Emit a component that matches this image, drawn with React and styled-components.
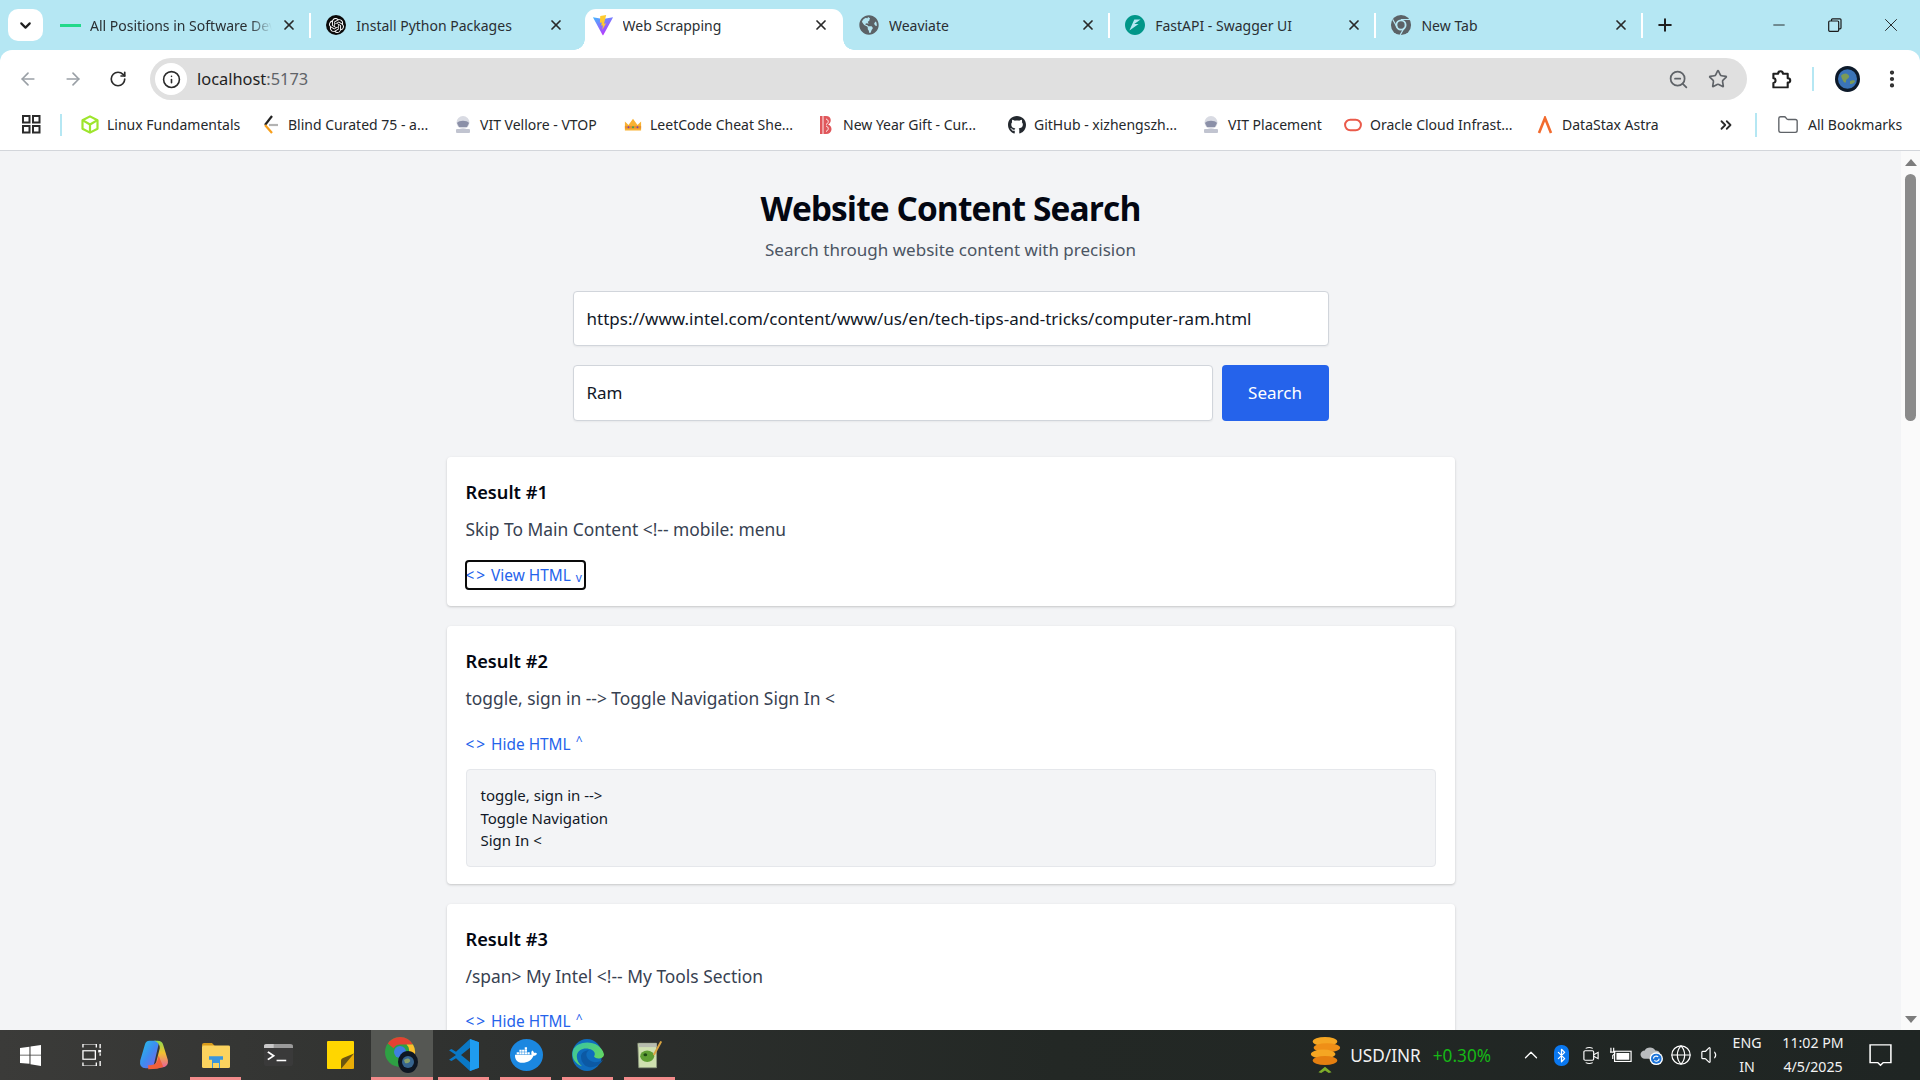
import React from 'react';
import styled, { createGlobalStyle } from 'styled-components';
import { ChevronDown, X, Plus, Minus, ArrowLeft, ArrowRight, RotateCw, Info, ZoomOut, Star, MoreVertical, Folder, ChevronsRight, ChevronUp, Bluetooth, Globe, Volume1 } from 'lucide-react';
import { FaGithub, FaGlobeAmericas, FaDocker } from 'react-icons/fa';
import { SiOpenai, SiFastapi } from 'react-icons/si';

const GlobalStyle = createGlobalStyle`
  html, body {
    margin: 0;
    padding: 0;
    height: 100%;
    overflow: hidden;
    font-family: "Noto Sans", "Open Sans", sans-serif;
  }
  * { box-sizing: border-box; }
`;

const Screen = styled.div`
  width: 1920px;
  height: 1080px;
  display: flex;
  flex-direction: column;
  overflow: hidden;
  background: #b5e7f3;
`;

/* ---- browser tabs ---- */
const TabStrip = styled.div`
  height: 50px;
  flex: none;
  display: flex;
  align-items: flex-start;
  padding-left: 8px;
  color: #2a2f33;
`;

const TabMenu = styled.div`
  width: 35px;
  height: 32px;
  margin-top: 9px;
  margin-right: 2px;
  border-radius: 10px;
  background: #fff;
  display: flex;
  align-items: center;
  justify-content: center;
`;

const Tab = styled.div`
  position: relative;
  width: 266.3px;
  height: 41px;
  margin-top: 9px;
  display: flex;
  align-items: center;
  padding: 0 14px 9px 14px;
  gap: 9px;
  font-size: 14px;
  white-space: nowrap;
  ${(p) => p.$active && `
    background: #fff;
    border-radius: 11px 11px 0 0;
    width: 258px;
    margin-left: 7px;
    margin-right: 1.3px;
    padding: 0 14px 9px 7px;
    &::before, &::after {
      content: '';
      position: absolute;
      bottom: 0;
      width: 11px;
      height: 11px;
      background: radial-gradient(circle at var(--cx) 0, #b5e7f3 10.5px, #fff 11px);
    }
    &::before { left: -11px; --cx: 0; }
    &::after { right: -11px; --cx: 100%; }
  `}
  ${(p) => p.$divider && `
    &::after {
      content: '';
      position: absolute;
      right: 0;
      top: 4px;
      width: 2px;
      height: 25px;
      background: #fff;
    }
  `}
`;

const TabIcon = styled.span`
  width: 22px;
  height: 22px;
  flex: none;
  display: flex;
  align-items: center;
  justify-content: center;
`;

const RoundBadge = styled.span`
  width: 20px;
  height: 20px;
  border-radius: 50%;
  background: #0a0a0a;
  display: flex;
  align-items: center;
  justify-content: center;
`;

const TabTitle = styled.span`
  flex: 1;
  min-width: 0;
  overflow: hidden;
  ${(p) => p.$fade && `
    -webkit-mask-image: linear-gradient(to right, #000 88%, transparent);
    mask-image: linear-gradient(to right, #000 88%, transparent);
  `}
`;

const GreenDash = styled.span`
  width: 21px;
  height: 3px;
  background: #22d98a;
`;

const NewTab = styled.div`
  width: 44px;
  height: 32px;
  margin-top: 9px;
  display: flex;
  align-items: center;
  justify-content: center;
`;

const WindowControls = styled.div`
  margin-left: auto;
  display: flex;
  height: 50px;
  padding-right: 1px;
`;

const WindowButton = styled.div`
  width: 56px;
  height: 50px;
  display: flex;
  align-items: center;
  justify-content: center;
`;

/* ---- address bar ---- */
const Toolbar = styled.div`
  height: 50px;
  flex: none;
  background: #fff;
  border-radius: 12px 12px 0 0;
  display: flex;
  align-items: flex-end;
  padding: 0 0 0 5px;
`;

const NavButton = styled.div`
  width: 45px;
  height: 42px;
  display: flex;
  align-items: center;
  justify-content: center;
`;

const Omnibox = styled.div`
  width: 1597px;
  height: 42px;
  margin-left: 10px;
  border-radius: 21px;
  background: #e0e0e0;
  display: flex;
  align-items: center;
  padding: 0 19px 0 5px;
  font-size: 16.4px;
`;

const SiteInfo = styled.div`
  width: 32px;
  height: 32px;
  border-radius: 50%;
  background: #fff;
  display: flex;
  align-items: center;
  justify-content: center;
  margin-right: 10px;
`;

const HostText = styled.span`
  padding-bottom: 1px;
`;

const Host = styled.span`
  color: #1f1f1f;
`;

const Port = styled.span`
  color: #5f6368;
`;

const OmniActions = styled.div`
  margin-left: auto;
  display: flex;
  gap: 19px;
  align-items: center;
`;

const ToolbarActions = styled.div`
  flex: 1;
  height: 42px;
  display: flex;
  align-items: center;
  padding-left: 24px;
`;

const VSep = styled.span`
  width: 2px;
  height: ${(p) => p.$h || 24}px;
  background: #b5e7f3;
  flex: none;
  margin: ${(p) => p.$m || '0'};
`;

const Avatar = styled.span`
  width: 25px;
  height: 26px;
  flex: none;
  display: flex;
  align-items: center;
  margin-right: 21px;
`;

const Dots = styled(MoreVertical)`
  flex: none;
`;

/* ---- bookmarks ---- */
const BookmarkBar = styled.div`
  height: 51px;
  flex: none;
  background: #fff;
  border-bottom: 1px solid #d3d6db;
  display: flex;
  align-items: center;
  padding: 0 0 1px 22px;
  font-size: 14px;
  color: #25282b;
  white-space: nowrap;
`;

const Bookmark = styled.div`
  width: ${(p) => p.$w}px;
  flex: none;
  display: flex;
  align-items: center;
  gap: 8px;
  overflow: hidden;
`;

const BookmarkIcon = styled.span`
  width: 18px;
  height: 20px;
  flex: none;
  display: flex;
  align-items: center;
  justify-content: center;
`;

const FolderIcon = styled(Folder)`
  flex: none;
  margin-right: 9px;
`;

/* ---- page ---- */
const Viewport = styled.div`
  flex: 1;
  min-height: 0;
  display: flex;
  background: #f3f4f6;
`;

const Content = styled.main`
  flex: 1;
  min-width: 0;
  overflow: hidden;
  display: flex;
  flex-direction: column;
  align-items: center;
  padding-top: 32px;
`;

const Title = styled.h1`
  margin: 0;
  font-size: 33.5px;
  line-height: 50px;
  font-weight: 700;
  color: #030712;
  font-family: "Open Sans", sans-serif;
  letter-spacing: -0.9px;
`;

const Subtitle = styled.p`
  margin: 3px 0 0;
  font-size: 17px;
  line-height: 28px;
  color: #4b5563;
`;

const SearchForm = styled.div`
  width: 756px;
  margin-top: 27px;
  display: flex;
  flex-direction: column;
  gap: 19px;
`;

const SearchRow = styled.div`
  display: flex;
  gap: 9px;
`;

const Field = styled.div`
  flex: 1 0 auto;
  height: ${(p) => p.$h}px;
  background: #fff;
  border: 1px solid #d1d5db;
  border-radius: 4px;
  padding: 0 13px ${(p) => p.$pb || 0}px;
  display: flex;
  align-items: center;
  font-size: 17px;
  color: #111827;
  white-space: nowrap;
  box-shadow: 0 1px 2px rgba(0, 0, 0, 0.05);
`;

const SearchButton = styled.button`
  width: 107px;
  height: 56px;
  border: none;
  border-radius: 4px;
  background: #2563eb;
  color: #fff;
  font: inherit;
  font-size: 17px;
  padding: 0 0 2px;
`;

const Results = styled.div`
  width: 1008px;
  margin-top: 36px;
  display: flex;
  flex-direction: column;
  gap: 20px;
  flex: none;
`;

const Card = styled.section`
  background: #fff;
  border-radius: 4px;
  padding: 21px 19px 17px;
  box-shadow: 0 1px 3px rgba(0, 0, 0, 0.14), 0 1px 2px rgba(0, 0, 0, 0.06);
`;

const CardTitle = styled.h3`
  margin: 0;
  font-size: 18.2px;
  line-height: 28px;
  font-weight: 600;
  color: #030712;
`;

const Snippet = styled.p`
  margin: 9px 0 0;
  font-size: 17.4px;
  line-height: 28px;
  color: #374151;
`;

const HtmlToggle = styled.button`
  display: inline-flex;
  align-items: center;
  height: 28px;
  margin-top: 18px;
  padding: 0;
  border: none;
  background: none;
  color: #2563eb;
  font: inherit;
  font-size: 15.4px;
  gap: 5px;
  border-radius: 3px;
  white-space: pre;
  width: ${(p) => (p.$focused ? '119px' : 'auto')};
  ${(p) => p.$focused && 'outline: 2px solid #0a0a0a; outline-offset: -1px;'}
`;

const CodeMark = styled.span`
  letter-spacing: 2px;
`;

const Caret = styled.span`
  font-size: 12px;
  line-height: 1;
  transform: translateY(${(p) => p.$y}px);
`;

const HtmlBlock = styled.div`
  margin-top: 11px;
  background: #f3f4f6;
  border: 1px solid #e5e7eb;
  border-radius: 4px;
  padding: 14px 14px;
  font-size: 15px;
  line-height: 22.5px;
  color: #111827;
`;

const ScrollTrack = styled.div`
  width: 19px;
  flex: none;
  background: #fafafa;
  display: flex;
  flex-direction: column;
  align-items: center;
  padding-top: 8px;
`;

const ScrollThumb = styled.div`
  width: 11px;
  height: 247px;
  margin-top: 8px;
  border-radius: 6px;
  background: #8a8a8a;
`;

const ArrowBlock = styled.span`
  width: 0;
  height: 0;
  border-left: 6px solid transparent;
  border-right: 6px solid transparent;
  ${(p) => (p.$down
    ? 'border-top: 7px solid #7c7c7c; margin-top: auto; margin-bottom: 7px;'
    : 'border-bottom: 7px solid #7c7c7c;')}
`;

/* ---- taskbar ---- */
const Taskbar = styled.footer`
  height: 50px;
  flex: none;
  display: flex;
  align-items: center;
  background: linear-gradient(90deg, #3b3b39 0%, #2f312f 25%, #232825 55%, #1f2523 100%);
  color: #f2f2f2;
`;

const Launcher = styled.div`
  display: flex;
  height: 100%;
  margin-left: -1px;
`;

const TaskCell = styled.div`
  position: relative;
  width: 62px;
  height: 100%;
  display: flex;
  align-items: center;
  justify-content: center;
  ${(p) => p.$active && 'background: #555753;'}
  ${(p) => p.$open && `
    &::after {
      content: '';
      position: absolute;
      bottom: 0;
      height: 3px;
      left: ${p.$active ? 0 : 5}px;
      right: ${p.$active ? 0 : 6}px;
      background: #f28b8b;
    }
  `}
`;

const Tray = styled.div`
  margin-left: auto;
  height: 100%;
  display: flex;
  align-items: center;
`;

const Ticker = styled.div`
  display: flex;
  align-items: center;
  gap: 9px;
  font-size: 17.2px;
  white-space: nowrap;
`;

const Gain = styled.span`
  color: #16b816;
  margin-left: 3px;
`;

const TrayIcon = styled.span`
  width: 30px;
  height: 30px;
  flex: none;
  display: flex;
  align-items: center;
  justify-content: center;
`;

const BluetoothBadge = styled.span`
  width: 15px;
  height: 21px;
  border-radius: 7px;
  background: #0a78f0;
  display: flex;
  align-items: center;
  justify-content: center;
`;

const TrayIcons = styled.div`
  display: flex;
  align-items: center;
  margin-left: 25px;
`;

const Stack = styled.div`
  width: ${(p) => p.$w}px;
  margin-right: ${(p) => p.$mr || 0}px;
  flex: none;
  display: flex;
  flex-direction: column;
  align-items: center;
  font-size: 14.2px;
  line-height: 24px;
  white-space: nowrap;
`;

const Notify = styled.div`
  width: 64px;
  margin-right: 8px;
  flex: none;
  display: flex;
  justify-content: center;
`;

const DockerBadge = styled.span`
  width: 33px;
  height: 32px;
  border-radius: 50%;
  background: #1b87e0;
  display: flex;
  align-items: center;
  justify-content: center;
`;

/* ---- logos drawn by hand ---- */
const ViteLogo = () => (
  <svg width="22" height="22" viewBox="0 0 24 24">
    <defs>
      <linearGradient id="viteA" x1="0" y1="0" x2="0.6" y2="1">
        <stop offset="0" stopColor="#41b8ff" />
        <stop offset="1" stopColor="#bd34fe" />
      </linearGradient>
    </defs>
    <path d="M1 3.500 12 5.500 23 3.500 12.400 23a.5.5 0 0 1-.9 0Z" fill="url(#viteA)" />
    <path d="M15.500 1 9 2.300l-.4 7.300 2-.4-.4 3.600 1.700-.4-.6 4.800 4-7-2.200.4 1.200-5Z" fill="#ffcb2e" />
  </svg>
);

const ChromeGray = () => (
  <svg width="22" height="22" viewBox="0 0 24 24">
    <circle cx="12" cy="12" r="11" fill="#5b6266" />
    <circle cx="12" cy="12" r="6" fill="#b5e7f3" />
    <circle cx="12" cy="12" r="4" fill="#5b6266" />
    <path d="M12 6h10M8 15 3 6M15.500 15 11 23" stroke="#b5e7f3" strokeWidth="1.300" />
  </svg>
);

const AppsGrid = () => (
  <svg width="19" height="19" viewBox="0 0 19 19" fill="none" stroke="#2b2b2b" strokeWidth="2">
    <rect x="1" y="1" width="6.500" height="6.500" />
    <rect x="11" y="1" width="6.500" height="6.500" />
    <rect x="1" y="11" width="6.500" height="6.500" />
    <rect x="11" y="11" width="6.500" height="6.500" />
  </svg>
);

const CubeIcon = () => (
  <svg width="18" height="19" viewBox="0 0 18 20" fill="none" stroke="#9ee52d" strokeWidth="2.200" strokeLinejoin="round" preserveAspectRatio="none">
    <path d="M9 1.500 16.500 5.500v9L9 18.500 1.500 14.500v-9Z" />
    <path d="M1.500 5.500 9 10l7.500-4.500M9 10v8.500" />
  </svg>
);

const BlindIcon = () => (
  <svg width="18" height="22" viewBox="0 0 18 22" fill="none" strokeWidth="2.200">
    <path d="M10 2 3 11" stroke="#222" />
    <path d="M3 11l7 8" stroke="#f89f1b" />
    <path d="M7 11h9" stroke="#b3b3b3" />
  </svg>
);

const SealIcon = () => (
  <svg width="18" height="20" viewBox="0 0 18 20">
    <circle cx="9" cy="7.500" r="6.500" fill="#d9dbe3" />
    <path d="M3 8c2-3 10-3 12 0l-2 4H5Z" fill="#8b90a8" />
    <rect x="2" y="14" width="14" height="4" rx="1" fill="#c1c4d0" />
  </svg>
);

const CrownIcon = () => (
  <svg width="20" height="20" viewBox="0 0 20 20">
    <path d="M1 16V6l4 4 5-7 5 7 4-4v10Z" fill="#f9b233" />
    <rect x="1" y="11" width="18" height="3" fill="#e8912d" />
    <circle cx="5" cy="12.500" r="1" fill="#7a3fb0" />
    <circle cx="10" cy="12.500" r="1.200" fill="#3fa34d" />
    <circle cx="15" cy="12.500" r="1" fill="#7a3fb0" />
  </svg>
);

const GiftIcon = () => (
  <svg width="16" height="20" viewBox="0 0 16 20">
    <path d="M2 1h6c6 0 6 7 2 8.500 5 1 5 9.500-2 9.500H2Z" fill="#e0575b" />
    <path d="M5 1v18M8 4c3 1 3 4 0 5.500M8 11c3 1 3 4 0 5.500" stroke="#fff" strokeWidth="0.900" fill="none" />
  </svg>
);

const AstraIcon = () => (
  <svg width="16" height="18" viewBox="0 0 16 18" fill="none" stroke="#f26b2e" strokeWidth="2.600">
    <path d="M2 17 8 2l6 15" />
  </svg>
);

const OracleIcon = () => (
  <svg width="20" height="14" viewBox="0 0 20 14" fill="none">
    <rect x="1.200" y="1.200" width="17.600" height="11.600" rx="5.800" stroke="#ea5a4a" strokeWidth="2.200" />
  </svg>
);

const Puzzle = () => (
  <svg width="21" height="21" viewBox="0 0 22 24" fill="none" stroke="#1f1f1f" strokeWidth="2.200" strokeLinejoin="round" preserveAspectRatio="none">
    <path d="M2.500 5.500h5c0-4 5-4 5 0h5v5c3.500 0 3.500 5 0 5v5.500H2.500v-5c3 0 3-5.500 0-5.500Z" />
  </svg>
);

const EarthAvatar = () => (
  <svg width="25" height="26" viewBox="0 0 25 29" preserveAspectRatio="none">
    <ellipse cx="12.500" cy="14.500" rx="12.500" ry="14.500" fill="#0d1a2a" />
    <ellipse cx="12.500" cy="14.500" rx="9.500" ry="11" fill="#3b74b8" />
    <path d="M6 11c3-4 7-3 8 0s-3 3-3 6-3 2-5-6ZM15 17c3-2 5-1 5 0s-3 4-5 3Z" fill="#7c9a55" />
  </svg>
);

const Restore = () => (
  <svg width="14" height="14" viewBox="0 0 14 14" fill="none" stroke="#1b1b1b" strokeWidth="1.200">
    <rect x="0.700" y="3" width="10" height="10.300" rx="1" />
    <path d="M3.500 3V1.800q0-1 1-1h7.500q1 0 1 1v8q0 1-1 1h-1.200" />
  </svg>
);

const WindowsLogo = () => (
  <svg width="21" height="21" viewBox="0 0 20 24" fill="#fff" preserveAspectRatio="none">
    <path d="M0 3.500 9 2v9H0ZM10 1.800 20 0v11H10ZM0 12h9v9.500L0 20.500ZM10 12h10v12l-10-2Z" />
  </svg>
);

const TaskView = () => (
  <svg width="21" height="22" viewBox="0 0 22 26" fill="none" stroke="#fff" strokeWidth="1.400" preserveAspectRatio="none">
    <path d="M1 0h14v4M1 26h14v-4M1 0v4M1 26v-4" />
    <rect x="1" y="8" width="13" height="10" />
    <path d="M19 0v5M19 11v3M19 20v6" />
    <rect x="17" y="7" width="3" height="3" fill="#fff" stroke="none" />
  </svg>
);

const Copilot = () => (
  <svg width="30" height="30" viewBox="0 0 26 36" preserveAspectRatio="none">
    <defs>
      <linearGradient id="copA" x1="0" y1="0" x2="1" y2="1">
        <stop offset="0" stopColor="#22c3e6" />
        <stop offset="0.500" stopColor="#3e8bf0" />
        <stop offset="1" stopColor="#8a5be8" />
      </linearGradient>
      <linearGradient id="copB" x1="0" y1="0" x2="0" y2="1">
        <stop offset="0" stopColor="#8ad94f" />
        <stop offset="0.450" stopColor="#f2c230" />
        <stop offset="1" stopColor="#e8609c" />
      </linearGradient>
    </defs>
    <path d="M9 1h5q3 0 3 4l-4 24q-1 5-5 5H6Q0 34 1 25L5 6q1-5 4-5Z" fill="url(#copA)" />
    <path d="M13 1h3q4 0 5 5l4 18q1 8-5 9h-9q3-2 4-7l3-16q0-7-5-9Z" fill="url(#copB)" />
    <path d="M8 30c4 1 7-1 8-5l1-6 4 13q-4 3-13 3Z" fill="#f0603c" />
  </svg>
);

const Explorer = () => (
  <svg width="28" height="25" viewBox="0 0 28 30" preserveAspectRatio="none">
    <path d="M0 2q0-2 2-2h8l3 4H0Z" fill="#d89b1a" />
    <rect y="3" width="28" height="27" rx="1.500" fill="#fbd35e" />
    <path d="M7 16h14v4h-3v10h-8V20H7Z" fill="#3a96dd" />
    <rect x="11" y="24" width="6" height="6" fill="#fbd35e" />
  </svg>
);

const TerminalApp = () => (
  <svg width="29" height="22" viewBox="0 0 30 28" preserveAspectRatio="none">
    <rect width="30" height="28" rx="3" fill="#3a3a3a" />
    <path d="M0 3q0-3 3-3h24q3 0 3 3v2H0Z" fill="#9a9a9a" />
    <path d="M0 3q0-3 3-3h7v5H0Z" fill="#c8c8c8" />
    <path d="M4 10l6 5-6 5" stroke="#fff" strokeWidth="2" fill="none" />
    <rect x="13" y="20" width="10" height="2" fill="#fff" />
  </svg>
);

const StickyNotes = () => (
  <svg width="27" height="28" viewBox="0 0 27 36" preserveAspectRatio="none">
    <path d="M1 0h25q1 0 1 1v33q0 2-2 2H1q-1 0-1-1V1q0-1 1-1Z" fill="#ffd600" />
    <path d="M14 36V25q0-2 2-3l11-6v18q0 2-2 2Z" fill="#6b5510" />
    <path d="M14 36 27 16v18q0 2-2 2Z" fill="#e9ad07" />
  </svg>
);

const ChromeApp = () => (
  <svg width="34" height="36" viewBox="0 0 34 36">
    <circle cx="15" cy="15" r="15" fill="#2ea043" />
    <path d="M15 0a15 15 0 0 1 13 7.500H15a7.500 7.500 0 0 0-6.500 3.800L2.800 6.500A15 15 0 0 1 15 0Z" fill="#e34133" />
    <path d="M28 7.500A15 15 0 0 1 15 30l6.500-11a7.500 7.500 0 0 0 0-11.500Z" fill="#fbc02d" />
    <circle cx="15" cy="15" r="6" fill="#3f7fe0" />
    <ellipse cx="23" cy="25" rx="10" ry="11" fill="#0e1622" />
    <circle cx="23" cy="25" r="6" fill="#37658f" />
    <path d="M19 23c3-2 5-2 6 0s-3 4-5 3Z" fill="#88a06a" />
  </svg>
);

const VsCode = () => (
  <svg width="30" height="32" viewBox="0 0 30 40" fill="#0a78c6" preserveAspectRatio="none">
    <path d="M21 0 30 4v32l-9 4L7 24l-4.500 3.500L0 26l7-6-7-6 2.500-1.500L7 16Zm0 11-9 9 9 9Z" />
    <path d="M21 0 30 4v32l-9 4Z" fill="#1f9cf0" />
  </svg>
);

const EdgeApp = () => (
  <svg width="32" height="32" viewBox="0 0 32 40" preserveAspectRatio="none">
    <defs>
      <linearGradient id="edgeA" x1="0" y1="0" x2="1" y2="1">
        <stop offset="0" stopColor="#36c2a8" />
        <stop offset="1" stopColor="#6fdc4f" />
      </linearGradient>
    </defs>
    <ellipse cx="15" cy="20" rx="15" ry="20" fill="#0f6cbd" />
    <path d="M1 14C5 1 28 0 32 19c0 6-8 7-10 3 4-8-8-13-14-8C3 18 4 28 10 34 2 30-1 22 1 14Z" fill="url(#edgeA)" />
    <path d="M9 22c0-5 4-8 8-8-5 3-3 14 6 15 3 0 6-1 8-3-3 8-12 12-18 7-3-3-4-7-4-11Z" fill="#0c59a4" />
  </svg>
);

const NotepadApp = () => (
  <svg width="28" height="29" viewBox="0 0 30 38" preserveAspectRatio="none">
    <path d="M2 3h20v32H3Z" fill="#cfe0b0" stroke="#8e9a80" />
    <path d="M3 3h19v5H3Z" fill="#b7bcae" />
    <circle cx="12" cy="20" r="7.500" fill="#5f9e34" />
    <circle cx="10" cy="18" r="2" fill="#1f4a14" />
    <path d="M26 0l2 1-8 18-2-1Z" fill="#d9a441" />
  </svg>
);

const Coins = () => (
  <svg width="32" height="38" viewBox="0 0 34 42" preserveAspectRatio="none">
    <ellipse cx="17" cy="6" rx="13" ry="5" fill="#f5a623" />
    <ellipse cx="19" cy="13" rx="14" ry="5" fill="#ef8f17" />
    <ellipse cx="15" cy="20" rx="13" ry="5" fill="#f5a623" />
    <ellipse cx="17" cy="27" rx="13" ry="5" fill="#e57f10" />
    <path d="M10 40l7-6 7 6-3 1-4-3-4 3Z" fill="#7fae2a" />
  </svg>
);

const MeetIcon = () => (
  <svg width="16" height="19" viewBox="0 0 18 24" fill="none" stroke="#fff" strokeWidth="1.300" preserveAspectRatio="none">
    <rect x="1" y="6" width="11" height="12" rx="1.500" />
    <path d="M12 11l5-3v8l-5-3M3 3q4-2 8 0M3 21q4 2 8 0" />
  </svg>
);

const BatteryPlug = () => (
  <svg width="22" height="17" viewBox="0 0 24 20" fill="none" preserveAspectRatio="none">
    <rect x="5" y="5" width="18" height="12" stroke="#fff" strokeWidth="1.300" />
    <rect x="7" y="7" width="14" height="8" fill="#fff" />
    <path d="M1 1v5M4 1v5M0 6h5v2l-2 2v4" stroke="#fff" strokeWidth="1.300" />
  </svg>
);

const CloudSync = () => (
  <svg width="23" height="20" viewBox="0 0 24 22" preserveAspectRatio="none">
    <path d="M5 15a4.500 4.500 0 0 1 0-9c1-4 9-5 11 0a4 4 0 0 1 1 9Z" fill="#b9bcbe" />
    <circle cx="17" cy="15" r="7" fill="#fff" />
    <circle cx="17" cy="15" r="5.500" fill="#1c74d9" />
    <path d="M14 15a3 3 0 0 1 5-2M20 15a3 3 0 0 1-5 2" stroke="#fff" strokeWidth="1.200" fill="none" />
  </svg>
);

const Bubble = () => (
  <svg width="23" height="23" viewBox="0 0 21 26" fill="none" stroke="#fff" strokeWidth="1.400" preserveAspectRatio="none">
    <path d="M1 1h19v20h-7l-2.500 3-2.500-3H1Z" />
  </svg>
);

const tabs = [
  { title: 'All Positions in Software Development', icon: <GreenDash />, fade: true, divider: true },
  { title: 'Install Python Packages', icon: <RoundBadge><SiOpenai size={15} color="#fff" /></RoundBadge> },
  { title: 'Web Scrapping', icon: <ViteLogo />, active: true },
  { title: 'Weaviate', icon: <FaGlobeAmericas size={20} color="#5b6266" />, divider: true },
  { title: 'FastAPI - Swagger UI', icon: <SiFastapi size={20} color="#009688" />, divider: true },
  { title: 'New Tab', icon: <ChromeGray />, divider: true },
];

const bookmarks = [
  { title: 'Linux Fundamentals', icon: <CubeIcon />, w: 181 },
  { title: 'Blind Curated 75 - a...', icon: <BlindIcon />, w: 192 },
  { title: 'VIT Vellore - VTOP', icon: <SealIcon />, w: 170 },
  { title: 'LeetCode Cheat She...', icon: <CrownIcon />, w: 193 },
  { title: 'New Year Gift - Cur...', icon: <GiftIcon />, w: 191 },
  { title: 'GitHub - xizhengszh...', icon: <FaGithub size={20} color="#24292f" />, w: 194 },
  { title: 'VIT Placement', icon: <SealIcon />, w: 142 },
  { title: 'Oracle Cloud Infrast...', icon: <OracleIcon />, w: 192 },
  { title: 'DataStax Astra', icon: <AstraIcon />, w: 181 },
];

const apps = [
  { icon: <WindowsLogo /> },
  { icon: <TaskView /> },
  { icon: <Copilot /> },
  { icon: <Explorer />, open: true },
  { icon: <TerminalApp /> },
  { icon: <StickyNotes /> },
  { icon: <ChromeApp />, open: true, active: true },
  { icon: <VsCode />, open: true },
  { icon: <DockerBadge><FaDocker size={22} color="#fff" /></DockerBadge>, open: true },
  { icon: <EdgeApp />, open: true },
  { icon: <NotepadApp />, open: true },
];

function HtmlButton({ open, focused }) {
  return (
    <HtmlToggle $focused={focused}>
      <span><CodeMark>{'<>'}</CodeMark>{open ? ' Hide HTML' : ' View HTML'}</span>
      {open ? <Caret $y={-3}>^</Caret> : <Caret $y={3}>v</Caret>}
    </HtmlToggle>
  );
}

function App() {
  return (
    <>
      <GlobalStyle />
      <Screen>
        <TabStrip>
          <TabMenu><ChevronDown size={17} strokeWidth={3} color="#1f1f1f" /></TabMenu>
          {tabs.map((tab) => (
            <Tab key={tab.title} $active={tab.active} $divider={tab.divider}>
              <TabIcon>{tab.icon}</TabIcon>
              <TabTitle $fade={tab.fade}>{tab.title}</TabTitle>
              <X size={16} strokeWidth={2.6} color="#2a2a2a" />
            </Tab>
          ))}
          <NewTab><Plus size={20} strokeWidth={2.4} color="#1f1f1f" /></NewTab>
          <WindowControls>
            <WindowButton><Minus size={18} strokeWidth={1.2} color="#1b1b1b" /></WindowButton>
            <WindowButton><Restore /></WindowButton>
            <WindowButton><X size={22} strokeWidth={1} color="#1b1b1b" /></WindowButton>
          </WindowControls>
        </TabStrip>

        <Toolbar>
          <NavButton><ArrowLeft size={20} color="#9aa0a6" /></NavButton>
          <NavButton><ArrowRight size={20} color="#9aa0a6" /></NavButton>
          <NavButton><RotateCw size={18} strokeWidth={2.2} color="#2b2b2b" /></NavButton>
          <Omnibox>
            <SiteInfo><Info size={19} color="#2b2b2b" /></SiteInfo>
            <HostText><Host>localhost</Host><Port>:5173</Port></HostText>
            <OmniActions>
              <ZoomOut size={21} color="#5f6368" />
              <Star size={20} color="#5f6368" />
            </OmniActions>
          </Omnibox>
          <ToolbarActions>
            <Puzzle />
            <VSep $m="0 21px 0 20px" />
            <Avatar><EarthAvatar /></Avatar>
            <Dots size={22} strokeWidth={2.6} color="#2b2b2b" />
          </ToolbarActions>
        </Toolbar>

        <BookmarkBar>
          <AppsGrid />
          <VSep $h={22} $m="0 19px 0 19px" />
          {bookmarks.map((b) => (
            <Bookmark key={b.title} $w={b.w}>
              <BookmarkIcon>{b.icon}</BookmarkIcon>
              {b.title}
            </Bookmark>
          ))}
          <ChevronsRight size={18} strokeWidth={2.4} color="#2b2b2b" />
          <VSep $h={24} $m="0 20px 0 20px" />
          <FolderIcon size={22} strokeWidth={1.5} color="#5f6368" />
          All Bookmarks
        </BookmarkBar>

        <Viewport>
          <Content>
            <Title>Website Content Search</Title>
            <Subtitle>Search through website content with precision</Subtitle>
            <SearchForm>
              <Field $h={55}>https://www.intel.com/content/www/us/en/tech-tips-and-tricks/computer-ram.html</Field>
              <SearchRow>
                <Field $h={56} $pb={2}>Ram</Field>
                <SearchButton>Search</SearchButton>
              </SearchRow>
            </SearchForm>
            <Results>
              <Card>
                <CardTitle>Result #1</CardTitle>
                <Snippet>Skip To Main Content &lt;!-- mobile: menu</Snippet>
                <HtmlButton focused />
              </Card>
              <Card>
                <CardTitle>Result #2</CardTitle>
                <Snippet>toggle, sign in --&gt; Toggle Navigation Sign In &lt;</Snippet>
                <HtmlButton open />
                <HtmlBlock>
                  toggle, sign in --&gt;<br />
                  Toggle Navigation<br />
                  Sign In &lt;
                </HtmlBlock>
              </Card>
              <Card>
                <CardTitle>Result #3</CardTitle>
                <Snippet>/span&gt; My Intel &lt;!-- My Tools Section</Snippet>
                <HtmlButton open />
              </Card>
            </Results>
          </Content>
          <ScrollTrack>
            <ArrowBlock />
            <ScrollThumb />
            <ArrowBlock $down />
          </ScrollTrack>
        </Viewport>

        <Taskbar>
          <Launcher>
            {apps.map((app, i) => (
              <TaskCell key={i} $open={app.open} $active={app.active}>{app.icon}</TaskCell>
            ))}
          </Launcher>
          <Tray>
            <Ticker>
              <Coins />
              <span>USD/INR</span>
              <Gain>+0.30%</Gain>
            </Ticker>
            <TrayIcons>
              <TrayIcon><ChevronUp size={22} strokeWidth={1.4} color="#fff" /></TrayIcon>
              <TrayIcon><BluetoothBadge><Bluetooth size={15} color="#fff" /></BluetoothBadge></TrayIcon>
              <TrayIcon><MeetIcon /></TrayIcon>
              <TrayIcon><BatteryPlug /></TrayIcon>
              <TrayIcon><CloudSync /></TrayIcon>
              <TrayIcon><Globe size={22} strokeWidth={1.3} color="#fff" /></TrayIcon>
              <TrayIcon><Volume1 size={22} strokeWidth={1.3} color="#fff" /></TrayIcon>
            </TrayIcons>
            <Stack $w={42} $mr={10}><span>ENG</span><span>IN</span></Stack>
            <Stack $w={70}><span>11:02 PM</span><span>4/5/2025</span></Stack>
            <Notify><Bubble /></Notify>
          </Tray>
        </Taskbar>
      </Screen>
    </>
  );
}

export default App;
